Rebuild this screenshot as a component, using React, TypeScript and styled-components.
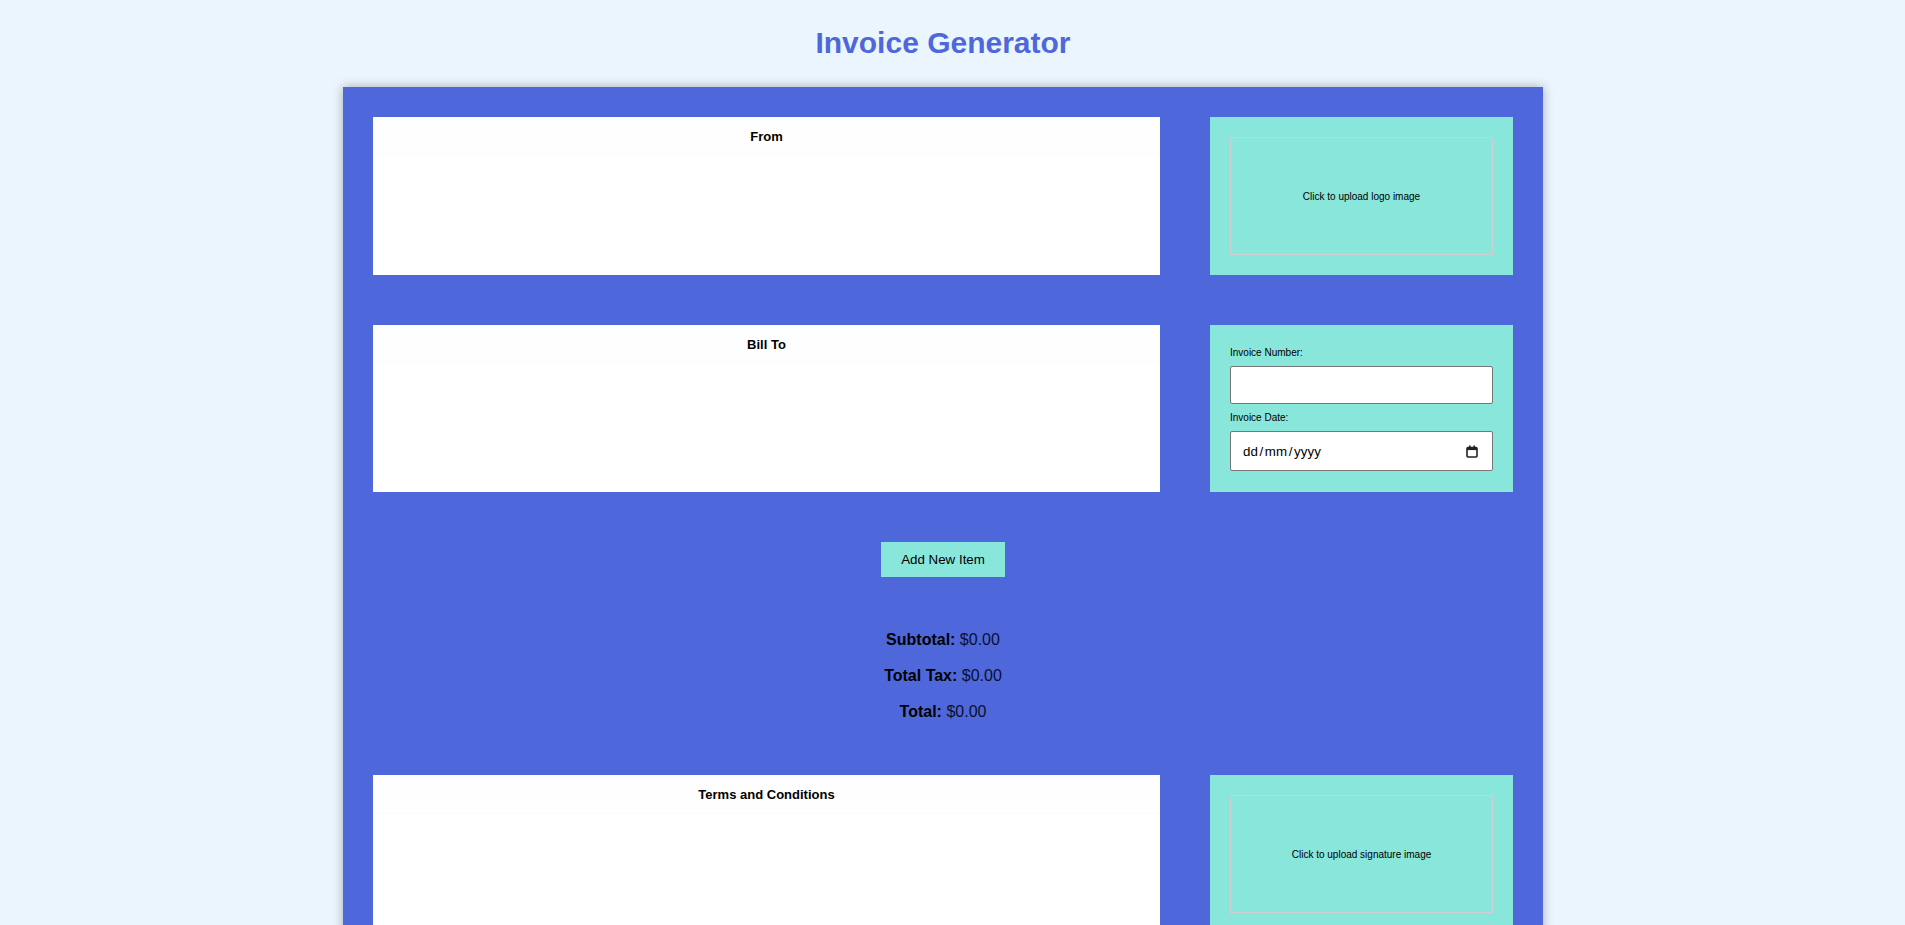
import React from "react";
import styled, { createGlobalStyle } from "styled-components";

const BLUE = "#4e68dc";
const TEAL = "#89e6da";

const GlobalStyle = createGlobalStyle`
  html, body { margin: 0; padding: 0; }
  body {
    background: #ebf5fe;
    font-family: "Liberation Sans", Arial, sans-serif;
    color: #000;
  }
  *, *::before, *::after { box-sizing: border-box; }
`;

const Page = styled.div`
  min-height: 1980px;
  padding: 0 19px 40px 0;
`;

const Title = styled.h1`
  margin: 25px 0 27px;
  font-size: 30px;
  line-height: 35px;
  font-weight: bold;
  text-align: center;
  color: ${BLUE};
`;

const Sheet = styled.main`
  width: 1200px;
  margin: 0 auto;
  padding: 30px;
  background: ${BLUE};
  box-shadow: 0 0 10px rgba(0, 0, 0, 0.3);
  display: flex;
  flex-direction: column;
  gap: 50px;
`;

const Row = styled.section`
  display: grid;
  grid-template-columns: 787px 303px;
  gap: 50px;
`;

const Panel = styled.div<{ $h: number }>`
  height: ${(p) => p.$h}px;
  background: #fff;
  display: flex;
  flex-direction: column;
`;

const PanelHeader = styled.div`
  height: 39px;
  line-height: 39px;
  text-align: center;
  font-size: 13px;
  font-weight: bold;
  background: #fefefe;
  border-bottom: 1px solid #fbfbfb;
`;

const PanelBody = styled.textarea`
  flex: 1;
  border: none;
  outline: none;
  resize: none;
  background: #fff;
  font-family: "Liberation Sans", Arial, sans-serif;
  font-size: 13px;
  padding: 8px 10px;
`;

const TealBox = styled.div<{ $h: number }>`
  height: ${(p) => p.$h}px;
  background: ${TEAL};
  padding: 20px;
  display: flex;
  flex-direction: column;
`;

const UploadArea = styled.label`
  flex: 1;
  border: 1px solid #d0cfd2;
  display: flex;
  align-items: center;
  justify-content: center;
  font-size: 10px;
  cursor: pointer;
`;

const FieldLabel = styled.label`
  display: block;
  font-size: 10px;
  line-height: 15px;
`;

const TextInput = styled.input`
  display: block;
  width: 100%;
  height: 38px;
  margin: 6px 0 6px;
  border: 1px solid #767676;
  border-radius: 2px;
  background: #fff;
  font-family: "Liberation Sans", Arial, sans-serif;
  font-size: 13.33px;
  padding: 0 10px;
`;

const DateField = styled.div`
  display: flex;
  align-items: center;
  height: 40px;
  margin-top: 6px;
  border: 1px solid #767676;
  border-radius: 2px;
  background: #fff;
  padding: 0 14px 0 12px;
  font-size: 13.33px;
`;

const DateText = styled.span`
  flex: 1;
  letter-spacing: 0.1px;
`;

const Slash = styled.span`
  margin: 0 1.5px;
`;

const ButtonRow = styled.div`
  display: flex;
  justify-content: center;
`;

const AddButton = styled.button`
  background: ${TEAL};
  border: none;
  padding: 10px 20px;
  font-family: "Liberation Sans", Arial, sans-serif;
  font-size: 13.33px;
  line-height: 15px;
  color: #000;
  cursor: pointer;
`;

const Totals = styled.div`
  padding: 4px 0;
  display: flex;
  flex-direction: column;
  gap: 18px;
  text-align: center;
  font-size: 16px;
`;

const TotalLine = styled.p`
  margin: 0;
  line-height: 18px;
  color: #0b0f2a;

  strong {
    color: #000;
  }
`;

function CalendarIcon() {
  return (
    <svg width="12" height="13" viewBox="0 0 12 13" aria-hidden="true">
      <rect x="1" y="2.5" width="10" height="9.5" rx="1" fill="none" stroke="#222" strokeWidth="1.6" />
      <rect x="1" y="2.5" width="10" height="2.6" fill="#222" />
      <rect x="3" y="0.5" width="1.6" height="2.5" fill="#222" />
      <rect x="7.4" y="0.5" width="1.6" height="2.5" fill="#222" />
    </svg>
  );
}

export default function App() {
  return (
    <Page>
      <GlobalStyle />
      <Title>Invoice Generator</Title>
      <Sheet>
        <Row>
          <Panel $h={158}>
            <PanelHeader>From</PanelHeader>
            <PanelBody aria-label="From" />
          </Panel>
          <TealBox $h={158}>
            <UploadArea>Click to upload logo image</UploadArea>
          </TealBox>
        </Row>

        <Row>
          <Panel $h={167}>
            <PanelHeader>Bill To</PanelHeader>
            <PanelBody aria-label="Bill To" />
          </Panel>
          <TealBox $h={167}>
            <FieldLabel htmlFor="inv-number">Invoice Number:</FieldLabel>
            <TextInput id="inv-number" type="text" />
            <FieldLabel>Invoice Date:</FieldLabel>
            <DateField>
              <DateText>
                dd<Slash>/</Slash>mm<Slash>/</Slash>yyyy
              </DateText>
              <CalendarIcon />
            </DateField>
          </TealBox>
        </Row>

        <ButtonRow>
          <AddButton type="button">Add New Item</AddButton>
        </ButtonRow>

        <Totals>
          <TotalLine>
            <strong>Subtotal:</strong> $0.00
          </TotalLine>
          <TotalLine>
            <strong>Total Tax:</strong> $0.00
          </TotalLine>
          <TotalLine>
            <strong>Total:</strong> $0.00
          </TotalLine>
        </Totals>

        <Row>
          <Panel $h={158}>
            <PanelHeader>Terms and Conditions</PanelHeader>
            <PanelBody aria-label="Terms and Conditions" />
          </Panel>
          <TealBox $h={158}>
            <UploadArea>Click to upload signature image</UploadArea>
          </TealBox>
        </Row>
      </Sheet>
    </Page>
  );
}
